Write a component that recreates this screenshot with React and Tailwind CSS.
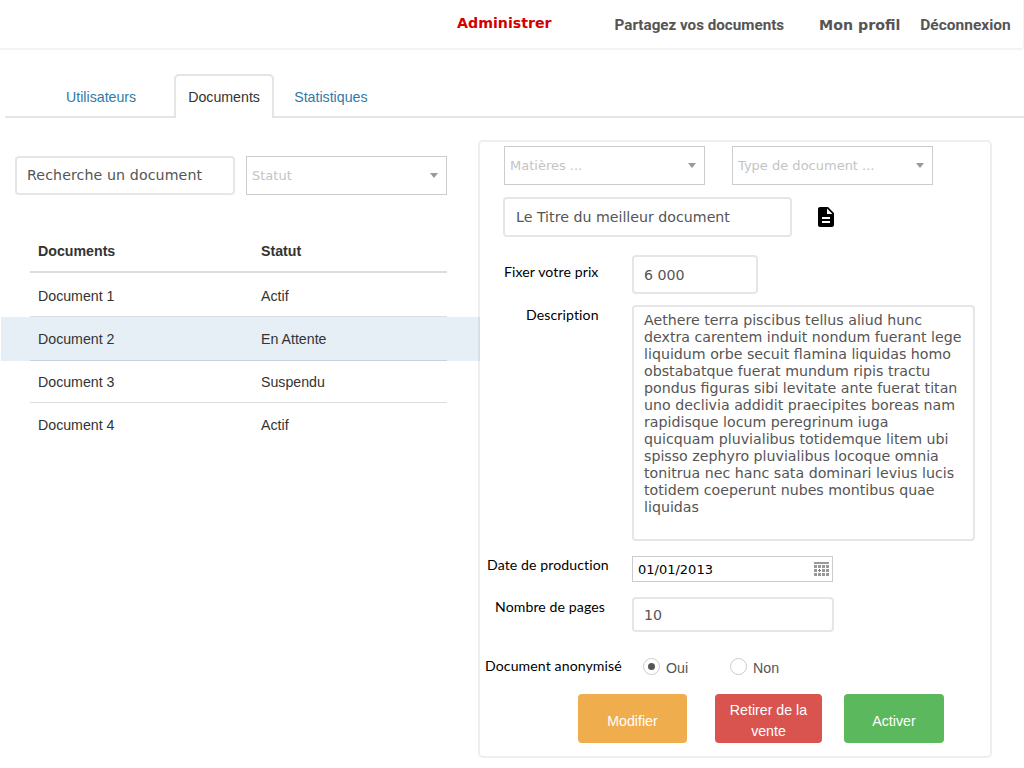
import React from 'react';
import { MdDescription } from 'react-icons/md';

const rows = [
    { name: 'Document 1', status: 'Actif', cls: 'h-[44px] pt-[5px] border-b border-[#ddd]' },
    { name: 'Document 2', status: 'En Attente', cls: 'h-[44px] pt-[2px] border-b border-[#ddd]', selected: true },
    { name: 'Document 3', status: 'Suspendu', cls: 'h-[42px] pt-[2px] border-b border-[#ddd]' },
    { name: 'Document 4', status: 'Actif', cls: 'h-[43px] pt-[3px]' },
];

const descriptionLines = [
    'Aethere terra piscibus tellus aliud hunc',
    'dextra carentem induit nondum fuerant lege',
    'liquidum orbe secuit flamina liquidas homo',
    'obstabatque fuerat mundum ripis tractu',
    'pondus figuras sibi levitate ante fuerat titan',
    'uno declivia addidit praecipites boreas nam',
    'rapidisque locum peregrinum iuga',
    'quicquam pluvialibus totidemque litem ubi',
    'spisso zephyro pluvialibus locoque omnia',
    'tonitrua nec hanc sata dominari levius lucis',
    'totidem coeperunt nubes montibus quae',
    'liquidas',
];

const inputFont = "font-['DejaVu_Sans',sans-serif] text-[14.2px] text-[#555]";
const labelFont = "font-['Lato',sans-serif] text-[14.1px] font-normal tracking-[0.1px] text-black";

// Select2-like dropdown with a small caret
const Select = ({ label, className }) => (
    <div className={`flex items-center justify-between border border-[#ccc] bg-white pl-[5px] pr-[8px] font-['DejaVu_Sans',sans-serif] text-[13px] text-[#c4c4c4] ${className}`}>
        <span>{label}</span>
        <span className="h-0 w-0 border-x-[4px] border-t-[5px] border-x-transparent border-t-[#999]"></span>
    </div>
);

const TextBox = ({ value, className }) => (
    <div className={`flex items-center rounded-[4px] border-2 border-[#e6e6e6] bg-white ${inputFont} ${className}`}>
        {value}
    </div>
);

const Radio = ({ checked, label, className }) => (
    <div className={`-mt-px flex items-center font-['Liberation_Sans',sans-serif] text-[14.2px] text-[#555] ${className}`}>
        <span className="flex h-[17px] w-[17px] items-center justify-center rounded-full border border-[#ccc] bg-white">
            {checked && <span className="h-[7px] w-[7px] rounded-full bg-[#555]"></span>}
        </span>
        <span className="ml-[6px] mt-[4px]">{label}</span>
    </div>
);

const CalendarIcon = () => (
    <svg width="15" height="14" viewBox="0 0 15 14" fill="#999">
        <rect x="0" y="0" width="15" height="2" />
        {[3, 7, 11].map((y) =>
            [0, 4, 8, 12].map((x) =>
                x === 4 && y === 7 ? null : <rect key={`${x}-${y}`} x={x} y={y} width="3" height="3" />
            )
        )}
        <rect x="5" y="7" width="1" height="3" fill="#777" />
        <rect x="4" y="8" width="3" height="1" fill="#777" />
    </svg>
);

export default function App() {
    return (
        <div className="min-h-[768px] overflow-hidden bg-white font-['Liberation_Sans',sans-serif]">
            {/* Top nav */}
            <header className="flex h-[50px] items-center rounded-br-[4px] border-b-2 border-r border-[#f3f3f3] pl-[457px]">
                <span className="mb-[1px] font-['DejaVu_Sans',sans-serif] text-[14.2px] font-bold text-[#d40000]">Administrer</span>
                <span className="ml-[63px] mt-[2px] font-['Roboto',sans-serif] text-[15.2px] font-bold text-[#555]">Partagez vos documents</span>
                <span className="ml-[35px] mt-[3px] font-['DejaVu_Sans',sans-serif] text-[14.2px] font-bold text-[#555]">Mon profil</span>
                <span className="ml-[20px] mt-[3px] font-['Roboto',sans-serif] text-[15.5px] font-bold text-[#555]">Déconnexion</span>
            </header>

            {/* Tabs */}
            <nav className="ml-[5px] mt-[25px] flex h-[43px] border-b-2 border-[#e5e5e5] text-[14.2px]">
                <span className="ml-[61px] mt-[12px] text-[#2f7ba8]">Utilisateurs</span>
                <span className="relative -mt-px ml-[38px] h-[44px] w-[100px] rounded-t-[5px] border-2 border-b-0 border-[#e5e5e5] bg-white pl-[12px] pt-[11px] text-[#333]">Documents</span>
                <span className="ml-[20px] mt-[12px] text-[#2f7ba8]">Statistiques</span>
            </nav>

            <div className="flex">
                {/* Left column */}
                <div className="w-[478px] pl-px">
                    <div className="ml-[14px] mt-[38px] flex">
                        <TextBox value="Recherche un document" className="h-[39px] w-[220px] pl-[10px] tracking-[0.1px]" />
                        <Select label="Statut" className="ml-[11px] h-[39px] w-[201px]" />
                    </div>

                    <div className="ml-[29px] mt-[46px] flex h-[32px] w-[417px] border-b-2 border-[#ddd] text-[14.2px] font-bold text-[#333]">
                        <span className="ml-[8px] w-[223px]">Documents</span>
                        <span>Statut</span>
                    </div>
                    {rows.map((row) => (
                        <div key={row.name} className={`relative ml-[29px] flex w-[417px] items-center pl-[8px] text-[14.2px] text-[#333] ${row.cls}`}>
                            {/* Highlight runs over the panel's border */}
                            {row.selected && <span className="absolute -bottom-px -left-[29px] top-0 w-[479px] bg-[#337ab7]/[.12]"></span>}
                            <span className="relative w-[223px]">{row.name}</span>
                            <span className="relative">{row.status}</span>
                        </div>
                    ))}
                </div>

                {/* Right panel */}
                <div className="mt-[22px] h-[618px] w-[514px] rounded-[5px] border-2 border-[#eee] pl-[24px]">
                    <div className="mt-[4px] flex">
                        <Select label="Matières ..." className="h-[39px] w-[201px]" />
                        <Select label="Type de document ..." className="ml-[27px] h-[39px] w-[201px]" />
                    </div>

                    <div className="-ml-px mt-[12px] flex items-center">
                        <TextBox value="Le Titre du meilleur document" className="h-[40px] w-[289px] pl-[11px] pt-px" />
                        <MdDescription className="ml-[22px] text-black" size={24} />
                    </div>

                    <div className="mt-[18px] flex">
                        <span className={`mt-[6px] w-[128px] ${labelFont}`}>Fixer votre prix</span>
                        <TextBox value="6 000" className="h-[39px] w-[126px] pl-[10px] pt-[3px]" />
                    </div>

                    <div className="mt-[11px] flex">
                        <span className={`-mt-px w-[128px] pl-[22px] ${labelFont}`}>Description</span>
                        <div className={`h-[236px] w-[343px] rounded-[4px] border-2 border-[#e6e6e6] pl-[10px] pt-[5px] leading-[17px] ${inputFont}`}>
                            {descriptionLines.map((line) => (
                                <div key={line} className="whitespace-nowrap">{line}</div>
                            ))}
                        </div>
                    </div>

                    <div className="-ml-[17px] mt-[15px] flex">
                        <span className={`-mt-[2px] w-[145px] ${labelFont}`}>Date de production</span>
                        <div className="flex h-[26px] w-[201px] items-center justify-between border border-[#ccc] pl-[5px] pr-[3px] font-['DejaVu_Sans',sans-serif] text-[13px] text-black">
                            <span className="pt-px">01/01/2013</span>
                            <CalendarIcon />
                        </div>
                    </div>

                    <div className="mt-[15px] flex">
                        <span className={`-ml-[9px] -mt-px w-[137px] ${labelFont}`}>Nombre de pages</span>
                        <TextBox value="10" className="h-[35px] w-[202px] pl-[10px] pt-[2px]" />
                    </div>

                    <div className="-ml-[19px] mt-[23px] flex">
                        <span className={`w-[158px] ${labelFont}`}>Document anonymisé</span>
                        <Radio checked label="Oui" />
                        <Radio label="Non" className="ml-[42px]" />
                    </div>

                    <div className="mt-[15px] flex text-[14.2px] text-white">
                        <button className="ml-[74px] h-[49px] w-[109px] rounded-[4px] bg-[#f0ad4e] pt-[5px]">Modifier</button>
                        <button className="ml-[28px] h-[49px] w-[107px] rounded-[4px] bg-[#d9534f] pt-[5px] leading-[21px]">Retirer de la vente</button>
                        <button className="ml-[22px] h-[49px] w-[100px] rounded-[4px] bg-[#5cb85c] pt-[5px]">Activer</button>
                    </div>
                </div>
            </div>
        </div>
    );
}
